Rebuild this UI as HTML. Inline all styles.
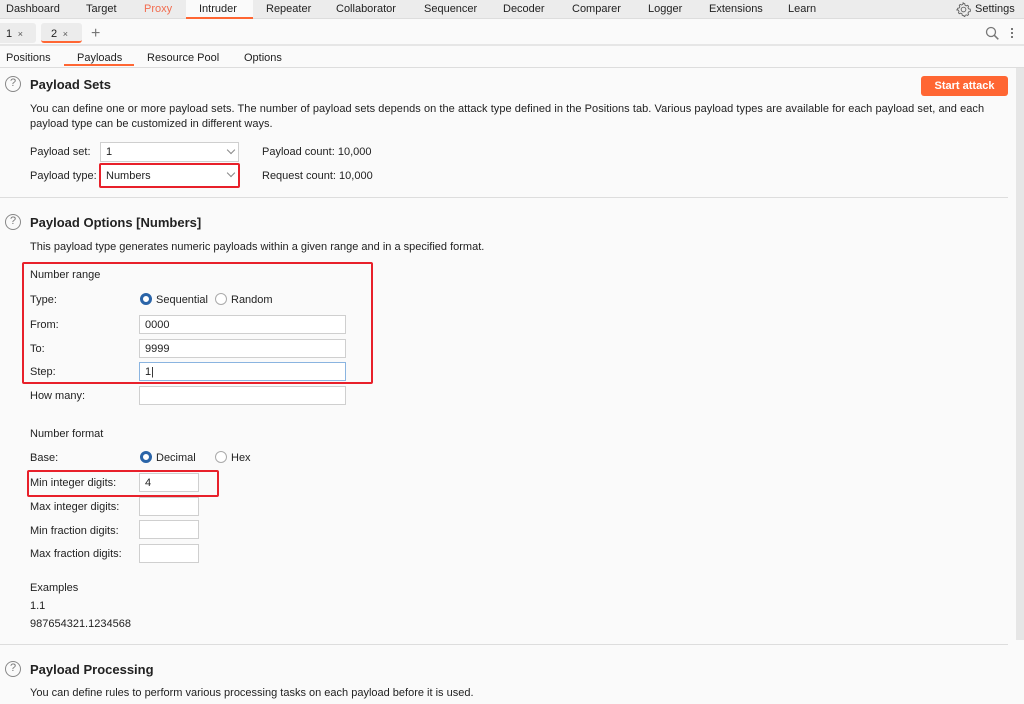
<!DOCTYPE html>
<html><head><meta charset="utf-8"><style>
*{margin:0;padding:0;box-sizing:border-box}
body{width:1024px;height:704px;overflow:hidden;background:#fafafa;font-family:"Liberation Sans","Noto Sans CJK SC",sans-serif;font-size:11px;color:#222;position:relative}
.a{position:absolute;white-space:nowrap;line-height:14px;margin-top:1px}
.bar{position:absolute;left:0;width:1024px}
.t{position:absolute;top:2px;line-height:14px}
.b{font-weight:bold;font-size:13px;line-height:16px}
.in{position:absolute;background:#fff;border:1px solid #cfcfcf}
.red{position:absolute;border:2px solid #e8202a;border-radius:2px}
.help{position:absolute;width:16px;height:16px;border:1.5px solid #888;border-radius:50%;color:#777;font-size:11px;line-height:13px;text-align:center}
.rad{position:absolute;width:12px;height:12px;border-radius:50%;border:1px solid #aaa;background:#fff}
.rad.on{border:3.5px solid #2a64a8}
.sep{position:absolute;left:0;width:1008px;height:1px;background:#ddd}
.chev{position:absolute;width:6px;height:6px;border-right:1px solid #888;border-bottom:1px solid #888;transform:rotate(45deg)}
</style></head><body>
<div class="bar" style="top:0;height:19px;background:#ececec;border-bottom:1px solid #ddd"></div>
<div style="position:absolute;left:186px;top:0;width:67px;height:19px;background:#fafafa;border-bottom:2px solid #ff6633"></div>
<div class="t" style="left:6px">Dashboard</div>
<div class="t" style="left:86px">Target</div>
<div class="t" style="left:144px;color:#f26c4f">Proxy</div>
<div class="t" style="left:199px">Intruder</div>
<div class="t" style="left:266px">Repeater</div>
<div class="t" style="left:336px">Collaborator</div>
<div class="t" style="left:424px">Sequencer</div>
<div class="t" style="left:503px">Decoder</div>
<div class="t" style="left:572px">Comparer</div>
<div class="t" style="left:648px">Logger</div>
<div class="t" style="left:709px">Extensions</div>
<div class="t" style="left:788px">Learn</div>
<svg style="position:absolute;left:956px;top:2px" width="15" height="15" viewBox="0 0 16 16"><circle cx="8" cy="8" r="2.5" fill="none" stroke="#666"/><path d="M8 1.5l1.3.3.3 1.6 1.3.7 1.5-.6 1 1-.6 1.5.7 1.3 1.6.3.3 1.3-.3 1.3-1.6.3-.7 1.3.6 1.5-1 1-1.5-.6-1.3.7-.3 1.6L8 14.5l-1.3-.3-.3-1.6-1.3-.7-1.5.6-1-1 .6-1.5-.7-1.3-1.6-.3L1.5 8l.3-1.3 1.6-.3.7-1.3-.6-1.5 1-1 1.5.6 1.3-.7.3-1.6z" fill="none" stroke="#666"/></svg>
<div class="t" style="left:975px">Settings</div>

<div class="bar" style="top:20px;height:26px;background:#fafafa;border-bottom:2px solid #e6e6e6"></div>
<div style="position:absolute;left:0;top:23px;width:36px;height:20px;background:#ececec;border-radius:0 3px 3px 0"></div>
<div class="a" style="left:6px;top:26px">1 <span style="font-size:9px;color:#555">&nbsp;×</span></div>
<div style="position:absolute;left:41px;top:23px;width:41px;height:20px;background:#ececec;border-radius:3px;border-bottom:2px solid #ff6633"></div>
<div class="a" style="left:51px;top:26px">2 <span style="font-size:9px;color:#555">&nbsp;×</span></div>
<div class="a" style="left:91px;top:26px;font-size:16px;color:#777">+</div>
<svg style="position:absolute;left:985px;top:26px" width="15" height="15"><circle cx="6" cy="6" r="4.5" fill="none" stroke="#777" stroke-width="1.3"/><path d="M9.3 9.3l4 4" stroke="#777" stroke-width="1.5"/></svg>
<div style="position:absolute;left:1011px;top:28px;width:2px;height:2px;background:#777;box-shadow:0 4px #777,0 8px #777"></div>

<div class="a" style="left:6px;top:50px">Positions</div>
<div class="a" style="left:77px;top:50px">Payloads</div>
<div style="position:absolute;left:64px;top:64px;width:70px;height:2px;background:#ff6633"></div>
<div class="a" style="left:147px;top:50px">Resource Pool</div>
<div class="a" style="left:244px;top:50px">Options</div>
<div class="bar" style="top:67px;height:1px;background:#ddd"></div>
<div style="position:absolute;left:1016px;top:68px;width:8px;height:572px;background:#e6e6e6"></div>

<div class="help" style="left:5px;top:76px">?</div>
<div class="a b" style="left:30px;top:76px">Payload Sets</div>
<div style="position:absolute;left:921px;top:76px;width:87px;height:20px;background:#ff6633;border-radius:3px;color:#fff;font-weight:bold;text-align:center;line-height:20px">Start attack</div>
<div class="a" style="left:30px;top:101px;letter-spacing:0.05px">You can define one or more payload sets. The number of payload sets depends on the attack type defined in the Positions tab. Various payload types are available for each payload set, and each</div>
<div class="a" style="left:30px;top:116px">payload type can be customized in different ways.</div>

<div class="a" style="left:30px;top:144px">Payload set:</div>
<div class="in" style="left:100px;top:142px;width:139px;height:20px"></div>
<div class="a" style="left:106px;top:144px">1</div>
<div class="chev" style="left:228px;top:147px"></div>
<div class="a" style="left:262px;top:144px">Payload count: 10,000</div>
<div class="a" style="left:30px;top:168px">Payload type:</div>
<div class="in" style="left:101px;top:165px;width:137px;height:21px;border-color:#fff"></div>
<div class="red" style="left:99px;top:163px;width:141px;height:25px"></div>
<div class="a" style="left:106px;top:168px">Numbers</div>
<div class="chev" style="left:228px;top:170px"></div>
<div class="a" style="left:262px;top:168px">Request count: 10,000</div>
<div class="sep" style="top:197px"></div>

<div class="help" style="left:5px;top:214px">?</div>
<div class="a b" style="left:30px;top:214px">Payload Options [Numbers]</div>
<div class="a" style="left:30px;top:239px">This payload type generates numeric payloads within a given range and in a specified format.</div>
<div class="red" style="left:22px;top:262px;width:351px;height:122px"></div>
<div class="a" style="left:30px;top:267px">Number range</div>
<div class="a" style="left:30px;top:292px">Type:</div>
<div class="rad on" style="left:140px;top:293px"></div><div class="a" style="left:156px;top:292px">Sequential</div>
<div class="rad" style="left:215px;top:293px"></div><div class="a" style="left:231px;top:292px">Random</div>
<div class="a" style="left:30px;top:317px">From:</div>
<div class="in" style="left:139px;top:315px;width:207px;height:19px"></div><div class="a" style="left:145px;top:317px">0000</div>
<div class="a" style="left:30px;top:341px">To:</div>
<div class="in" style="left:139px;top:339px;width:207px;height:19px"></div><div class="a" style="left:145px;top:341px">9999</div>
<div class="a" style="left:30px;top:364px">Step:</div>
<div class="in" style="left:139px;top:362px;width:207px;height:19px;border-color:#8ab4e0"></div><div class="a" style="left:145px;top:364px">1|</div>
<div class="a" style="left:30px;top:388px">How many:</div>
<div class="in" style="left:139px;top:386px;width:207px;height:19px"></div>

<div class="a" style="left:30px;top:426px">Number format</div>
<div class="a" style="left:30px;top:450px">Base:</div>
<div class="rad on" style="left:140px;top:451px"></div><div class="a" style="left:156px;top:450px">Decimal</div>
<div class="rad" style="left:215px;top:451px"></div><div class="a" style="left:231px;top:450px">Hex</div>
<div class="red" style="left:27px;top:470px;width:192px;height:27px"></div>
<div class="a" style="left:30px;top:475px">Min integer digits:</div>
<div class="in" style="left:139px;top:473px;width:60px;height:19px"></div><div class="a" style="left:145px;top:475px">4</div>
<div class="a" style="left:30px;top:499px">Max integer digits:</div>
<div class="in" style="left:139px;top:497px;width:60px;height:19px"></div>
<div class="a" style="left:30px;top:523px">Min fraction digits:</div>
<div class="in" style="left:139px;top:520px;width:60px;height:19px"></div>
<div class="a" style="left:30px;top:546px">Max fraction digits:</div>
<div class="in" style="left:139px;top:544px;width:60px;height:19px"></div>
<div class="a" style="left:30px;top:580px">Examples</div>
<div class="a" style="left:30px;top:598px">1.1</div>
<div class="a" style="left:30px;top:616px">987654321.1234568</div>
<div class="sep" style="top:644px"></div>
<div class="help" style="left:5px;top:661px">?</div>
<div class="a b" style="left:30px;top:661px">Payload Processing</div>
<div class="a" style="left:30px;top:685px">You can define rules to perform various processing tasks on each payload before it is used.</div>
</body></html>
